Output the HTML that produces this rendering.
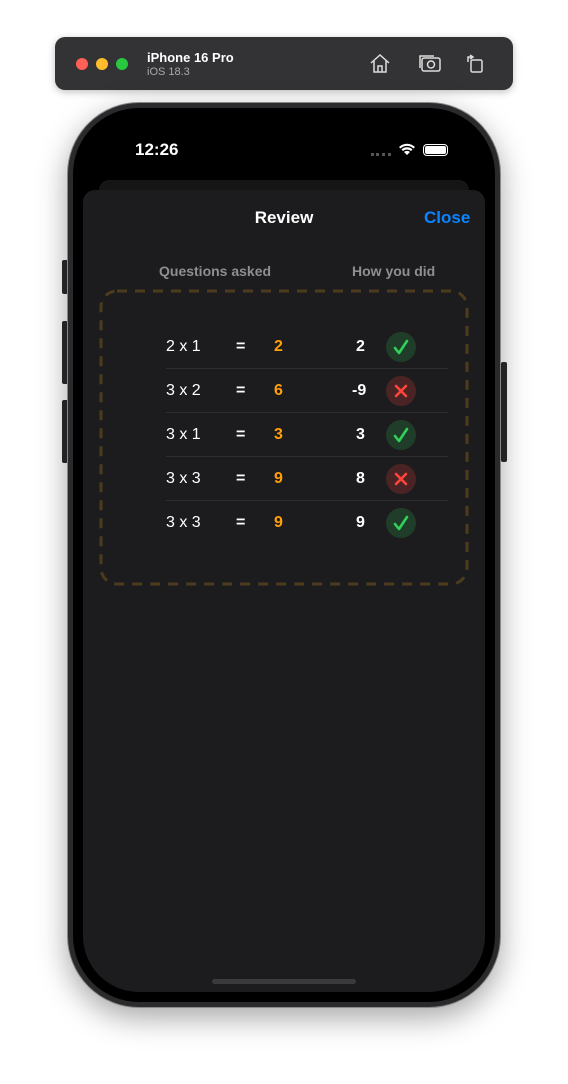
<!DOCTYPE html>
<html><head><meta charset="utf-8"><style>
*{margin:0;padding:0;box-sizing:border-box}
body{width:568px;height:1084px;background:#fff;position:relative;overflow:hidden;font-family:"Liberation Sans",sans-serif}
.abs{position:absolute}
.bar{left:55px;top:37px;width:458px;height:53px;background:#333335;border-radius:10px;box-shadow:0 2px 8px rgba(0,0,0,.25)}
.dot{width:12px;height:12px;border-radius:50%;top:58px}
.phone{left:67px;top:102px;width:434px;height:906px;border-radius:72px;background:#2a2a2c;box-shadow:0 10px 30px rgba(0,0,0,.35);border:1px solid #888}
.scr{left:73px;top:108px;width:422px;height:894px;border-radius:66px;background:#000}
.sheet{left:83px;top:190px;width:402px;height:802px;background:#1c1c1e;border-radius:12px 12px 56px 56px}
.btn{background:#2a2a2c;width:6px;border-radius:2px}
.row{position:absolute;left:0;width:568px;height:44px;color:#fff;font-size:16px;font-weight:bold}
.row span{position:absolute;top:0;line-height:44px}
.sep{position:absolute;left:166px;width:282px;height:1px;background:#2f2f31}
.ic{position:absolute;left:386px;width:30px;height:30px;border-radius:50%;top:7px}
.ok{background:#1f3d28}.no{background:#4a2424}
</style></head><body>
<div class="abs bar"></div>
<div class="abs dot" style="left:76px;background:#fe5f57"></div>
<div class="abs dot" style="left:96px;background:#febc2e"></div>
<div class="abs dot" style="left:116px;background:#28c840"></div>
<div class="abs" style="left:147px;top:50px;color:#fff;font-size:13px;font-weight:bold">iPhone 16 Pro</div>
<div class="abs" style="left:147px;top:66px;color:#aaa;font-size:11px">iOS 18.3</div>
<svg class="abs" style="left:368px;top:52px" width="120" height="24" fill="none" stroke="#ddd" stroke-width="1.5">
<path d="M3 11 L12 3 L21 11 M6 9 V20 H18 V9 M10 20 V14 H14 V20"/>
<rect x="54" y="6" width="18" height="13" rx="2"/><circle cx="63" cy="12.5" r="3.5"/><path d="M52 16 V4 H66"/>
<rect x="103" y="8" width="11" height="12" rx="1.5"/><path d="M100 10 V5 H105 M102 3 L105 5 L102 7"/>
</svg>
<div class="abs btn" style="left:62px;top:260px;height:34px"></div>
<div class="abs btn" style="left:62px;top:321px;height:63px"></div>
<div class="abs btn" style="left:62px;top:400px;height:63px"></div>
<div class="abs btn" style="left:501px;top:362px;height:100px"></div>
<div class="abs phone"></div>
<div class="abs scr"></div>
<div class="abs" style="left:135px;top:140px;color:#fff;font-size:17px;font-weight:bold">12:26</div>
<div class="abs" style="left:371px;top:153px;width:20px;height:3px;border-top:3px dotted #555"></div>
<svg class="abs" style="left:398px;top:142px" width="18" height="14" fill="#fff"><path d="M9 13 L6 10 A4.5 4.5 0 0 1 12 10 Z M3.5 7.5 A8 8 0 0 1 14.5 7.5 L13 9 A6 6 0 0 0 5 9Z M1 5 A11.5 11.5 0 0 1 17 5 L15.5 6.5 A9.5 9.5 0 0 0 2.5 6.5Z"/></svg>
<div class="abs" style="left:423px;top:144px;width:25px;height:12px;border:1.5px solid #fff;border-radius:4px;padding:1px"><div style="background:#fff;width:100%;height:100%;border-radius:2px"></div></div>
<div class="abs" style="left:99px;top:180px;width:370px;height:20px;background:#151516;border-radius:10px 10px 0 0"></div>
<div class="abs sheet"></div>
<div class="abs" style="left:0;width:568px;top:208px;text-align:center;color:#fff;font-size:17px;font-weight:bold">Review</div>
<div class="abs" style="left:424px;top:208px;color:#0a84ff;font-size:17px;font-weight:bold">Close</div>
<div class="abs" style="left:159px;top:263px;color:#8e8e93;font-size:14px;font-weight:bold">Questions asked</div>
<div class="abs" style="left:352px;top:263px;color:#8e8e93;font-size:14px;font-weight:bold">How you did</div>
<svg class="abs" style="left:98px;top:288px" width="374" height="300"><rect x="3" y="3" width="366" height="293" rx="16" fill="none" stroke="#4c3b1d" stroke-width="3" stroke-dasharray="10 8"/></svg>

<div class="row" style="top:325px"><span style="left:166px;font-weight:normal">2 x 1</span><span style="left:236px">=</span><span style="left:274px;color:#ff9f0a">2</span><span style="left:356px">2</span><div class="ic ok"></div></div>
<div class="sep" style="top:368px"></div>
<div class="row" style="top:369px"><span style="left:166px;font-weight:normal">3 x 2</span><span style="left:236px">=</span><span style="left:274px;color:#ff9f0a">6</span><span style="left:352px">-9</span><div class="ic no"></div></div>
<div class="sep" style="top:412px"></div>
<div class="row" style="top:413px"><span style="left:166px;font-weight:normal">3 x 1</span><span style="left:236px">=</span><span style="left:274px;color:#ff9f0a">3</span><span style="left:356px">3</span><div class="ic ok"></div></div>
<div class="sep" style="top:456px"></div>
<div class="row" style="top:457px"><span style="left:166px;font-weight:normal">3 x 3</span><span style="left:236px">=</span><span style="left:274px;color:#ff9f0a">9</span><span style="left:356px">8</span><div class="ic no"></div></div>
<div class="sep" style="top:500px"></div>
<div class="row" style="top:501px"><span style="left:166px;font-weight:normal">3 x 3</span><span style="left:236px">=</span><span style="left:274px;color:#ff9f0a">9</span><span style="left:356px">9</span><div class="ic ok"></div></div>

<svg class="abs" style="left:0;top:0" width="568" height="600" fill="none" stroke-width="2.6" stroke-linecap="round" stroke-linejoin="round">
<g stroke="#30d158"><path d="M395 348 L399 353 L407 341"/><path d="M395 436 L399 441 L407 429"/><path d="M395 524 L399 529 L407 517"/></g>
<g stroke="#ff453a"><path d="M396 386 L406 396 M406 386 L396 396"/><path d="M396 474 L406 484 M406 474 L396 484"/></g>
</svg>
<div class="abs" style="left:212px;top:979px;width:144px;height:5px;border-radius:3px;background:#3a3a3c"></div>
</body></html>
